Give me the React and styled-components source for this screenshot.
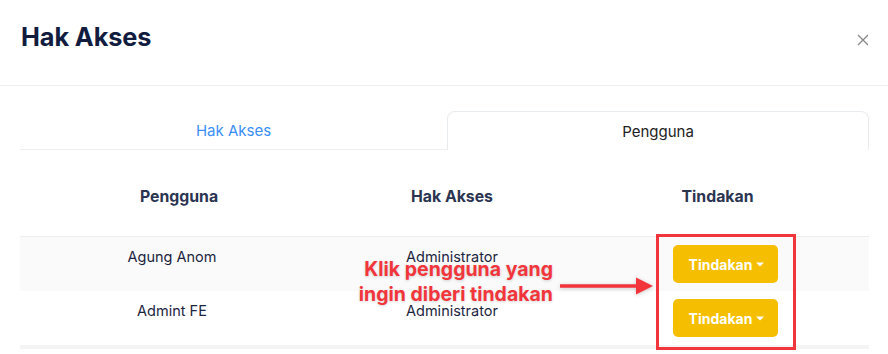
import React from 'react';
import styled, { createGlobalStyle } from 'styled-components';

const USERS = [
  { name: 'Agung Anom', role: 'Administrator' },
  { name: 'Admint FE', role: 'Administrator' },
];

const GlobalStyle = createGlobalStyle`
  html, body { margin: 0; padding: 0; background: #fff; }
  body { font-family: Inter, "Noto Sans", sans-serif; color: #1c2540; }
`;

const CaretDown = () => (
  <svg width="8" height="5" viewBox="0 0 8 5" aria-hidden="true">
    <path d="M0 0.5h8L4 4.5z" fill="currentColor" />
  </svg>
);

const CloseIcon = () => (
  <svg width="12" height="12" viewBox="0 0 12 12" aria-hidden="true">
    <path d="M1 1l10 10M11 1L1 11" stroke="#8a8a8a" strokeWidth="1.4" fill="none" />
  </svg>
);

const Arrow = () => (
  <svg width="94" height="20" viewBox="0 0 94 20" aria-hidden="true">
    <path d="M0 10h78" stroke="#f2353b" strokeWidth="3.5" />
    <path d="M76 1.5L93 10L76 18.5z" fill="#f2353b" />
  </svg>
);

const App = () => {
  return (
    <>
      <GlobalStyle />
      <Modal>
        <Header>
          <Title>Hak Akses</Title>
          <CloseButton aria-label="Tutup">
            <CloseIcon />
          </CloseButton>
        </Header>
        <Body>
          <Tabs>
            <Tab>Hak Akses</Tab>
            <Tab $active>Pengguna</Tab>
          </Tabs>
          <Table>
            <HeadRow>
              <HeadCell>Pengguna</HeadCell>
              <HeadCell>Hak Akses</HeadCell>
              <HeadCell>Tindakan</HeadCell>
            </HeadRow>
            {USERS.map((u, i) => (
              <Row key={u.name} $striped={i % 2 === 0}>
                <Cell>{u.name}</Cell>
                <Cell>{u.role}</Cell>
                <ButtonCell>
                  <ActionButton>
                    Tindakan <CaretDown />
                  </ActionButton>
                </ButtonCell>
              </Row>
            ))}
          </Table>
        </Body>

        <Callout>
          Klik pengguna yang
          <br />
          ingin diberi tindakan
        </Callout>
        <ArrowWrap>
          <Arrow />
        </ArrowWrap>
        <Highlight />
      </Modal>
    </>
  );
};

const Modal = styled.div`
  position: relative;
  width: 888px;
  height: 354px;
  overflow: hidden;
  background: #fff;
`;

const Header = styled.div`
  height: 86px;
  box-sizing: border-box;
  display: flex;
  align-items: center;
  justify-content: space-between;
  padding: 0 19px 0 21px;
  border-bottom: 1px solid #eeeeee;
`;

const Title = styled.h2`
  margin: 0 0 12px;
  font-size: 25.3px;
  font-weight: 700;
  color: #121c3f;
  letter-spacing: -0.1px;
`;

const CloseButton = styled.button`
  border: 0;
  background: none;
  padding: 0;
  display: flex;
  margin-bottom: 6px;
`;

const Body = styled.div`
  padding: 25px 19px 0 20px;
`;

const Tabs = styled.div`
  display: grid;
  grid-template-columns: 427px 1fr;
  height: 39px;
`;

const Tab = styled.div`
  display: flex;
  align-items: center;
  justify-content: center;
  font-size: 15px;
  color: ${p => (p.$active ? '#222' : '#3a8ef6')};
  border-bottom: 1px solid ${p => (p.$active ? 'transparent' : '#eeeeee')};
  ${p => p.$active && `
    border: 1px solid #e9ecef;
    border-bottom: none;
    border-radius: 8px 8px 0 0;
  `}
`;

const Table = styled.div`
  border-bottom: 4px solid #f4f4f4;
`;

const HeadRow = styled.div`
  display: grid;
  grid-template-columns: 318px 228px 1fr;
  height: 87px;
  align-items: end;
  padding-bottom: 29px;
  box-sizing: border-box;
  border-bottom: 1px solid #eeeeee;
`;

const HeadCell = styled.div`
  text-align: center;
  font-size: 15.8px;
  font-weight: 700;
  color: #2b3451;
  line-height: 20px;
`;

const Row = styled.div`
  display: grid;
  grid-template-columns: 304px 256px 1fr;
  background: ${p => (p.$striped ? '#fafafa' : '#fff')};
`;

const Cell = styled.div`
  padding: 10px 8px 0;
  text-align: center;
  font-size: 14.5px;
  line-height: 20px;
  color: #1c2540;
`;

const ButtonCell = styled.div`
  display: flex;
  justify-content: center;
  padding: 8px 0 8px 2px;
`;

const ActionButton = styled.button`
  display: inline-flex;
  align-items: center;
  gap: 4px;
  height: 38px;
  padding: 0 14px 0 16px;
  border: 0;
  border-radius: 5px;
  background: #f5bf00;
  color: #fff;
  font-family: Inter, "Noto Sans", sans-serif;
  font-size: 14px;
  font-weight: 700;
`;

const Callout = styled.div`
  position: absolute;
  left: 340px;
  top: 257px;
  width: 213px;
  text-align: right;
  color: #f2353b;
  font-size: 19.5px;
  font-weight: 700;
  line-height: 25px;
  text-shadow: 0 1px 3px rgba(0, 0, 0, 0.18);
`;

const ArrowWrap = styled.div`
  position: absolute;
  left: 560px;
  top: 276px;
  display: flex;
  filter: drop-shadow(0 1px 2px rgba(0, 0, 0, 0.2));
`;

const Highlight = styled.div`
  position: absolute;
  left: 656px;
  top: 234px;
  width: 140px;
  height: 116px;
  box-sizing: border-box;
  border: 3px solid #f2353b;
`;

export default App;
